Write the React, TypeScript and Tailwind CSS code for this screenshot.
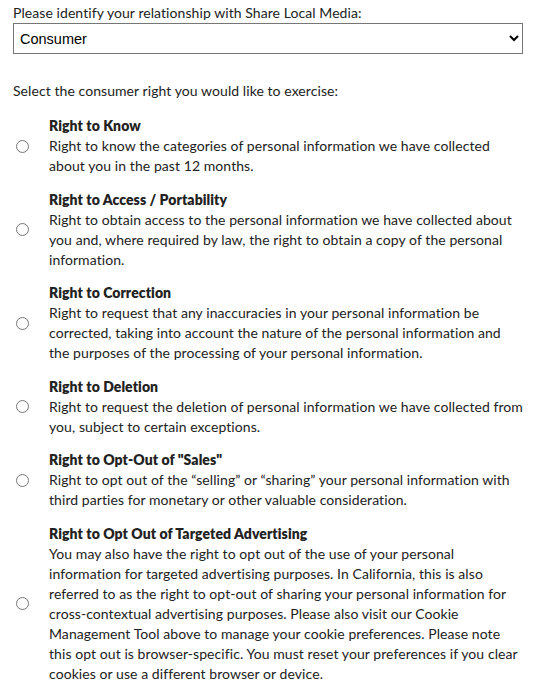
const rights = [
  {
    title: 'Right to Know',
    lines: [
      'Right to know the categories of personal information we have collected',
      'about you in the past 12 months.',
    ],
  },
  {
    title: 'Right to Access / Portability',
    lines: [
      'Right to obtain access to the personal information we have collected about',
      'you and, where required by law, the right to obtain a copy of the personal',
      'information.',
    ],
  },
  {
    title: 'Right to Correction',
    lines: [
      'Right to request that any inaccuracies in your personal information be',
      'corrected, taking into account the nature of the personal information and',
      'the purposes of the processing of your personal information.',
    ],
  },
  {
    title: 'Right to Deletion',
    lines: [
      'Right to request the deletion of personal information we have collected from',
      'you, subject to certain exceptions.',
    ],
  },
  {
    title: 'Right to Opt-Out of "Sales"',
    lines: [
      'Right to opt out of the \u201cselling\u201d or \u201csharing\u201d your personal information with',
      'third parties for monetary or other valuable consideration.',
    ],
  },
  {
    title: 'Right to Opt Out of Targeted Advertising',
    lines: [
      'You may also have the right to opt out of the use of your personal',
      'information for targeted advertising purposes. In California, this is also',
      'referred to as the right to opt-out of sharing your personal information for',
      'cross-contextual advertising purposes. Please also visit our Cookie',
      'Management Tool above to manage your cookie preferences. Please note',
      'this opt out is browser-specific. You must reset your preferences if you clear',
      'cookies or use a different browser or device.',
    ],
  },
];

export default function App() {
  return (
    <div className="min-h-screen bg-white px-[13px] pt-[3px] text-[#222] font-['Lato',sans-serif] text-[14px] leading-[20px] tracking-[0.07px]">
      <label className="block">Please identify your relationship with Share Local Media:</label>
      <select
        defaultValue="consumer"
        className="block h-[31px] w-full border border-[#767676] bg-white pl-[2px] font-['Liberation_Sans',Arial,sans-serif] text-[14.5px] tracking-normal text-black"
      >
        <option value="consumer">Consumer</option>
        <option value="employee">Employee</option>
      </select>
      <p className="mt-[27px]">Select the consumer right you would like to exercise:</p>
      <div className="mt-[15px] flex flex-col gap-[13.5px]">
        {rights.map((r) => (
          <label key={r.title} className="flex items-center">
            <input type="radio" name="right" className="ml-[3px] h-[13px] w-[13px] shrink-0" />
            <div className="ml-[20px] min-w-0">
              <div className="font-extrabold">{r.title}</div>
              {r.lines.map((line) => (
                <div key={line} className="whitespace-nowrap">
                  {line}
                </div>
              ))}
            </div>
          </label>
        ))}
      </div>
    </div>
  );
}
